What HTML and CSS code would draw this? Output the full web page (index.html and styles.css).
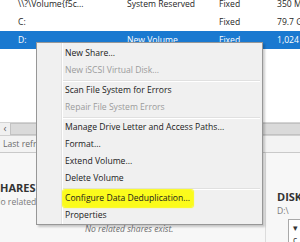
FILE: index.html
```html
<!DOCTYPE html>
<html>
<head>
<meta charset="utf-8">
<link rel="stylesheet" href="styles.css">
</head>
<body>
<div class="screen">
  <div class="list">
    <div class="rows">
      <div class="row"><span class="c1">\\?\Volume{f5c...</span><span class="c2">System Reserved</span><span class="c3">Fixed</span><span class="c4">350 MB</span></div>
      <div class="row"><span class="c1">C:</span><span class="c2"></span><span class="c3">Fixed</span><span class="c4">79.7 GB</span></div>
      <div class="row sel"><span class="c1">D:</span><span class="c2">New Volume</span><span class="c3">Fixed</span><span class="c4">1,024 GB</span></div>
    </div>
  </div>
  <div class="hscroll">
    <div class="arrow">&#8249;</div>
    <div class="thumb"></div>
  </div>
  <div class="status">Last refreshed on 10/10/2016</div>
  <div class="tiles">
    <div class="tile shares">
      <div class="tile-head">SHARES</div>
      <div class="tile-sub">No related shares</div>
      <div class="empty">No related shares exist.</div>
    </div>
    <div class="tile disks">
      <div class="tile-head">DISKS</div>
      <div class="tile-sub">D:\</div>
      <div class="disk-box"><span class="tri">&#9662;</span><span class="dtxt">c</span></div>
    </div>
  </div>

  <div class="menu">
    <div class="item">New Share...</div>
    <div class="item off">New iSCSI Virtual Disk...</div>
    <div class="sep"></div>
    <div class="item">Scan File System for Errors</div>
    <div class="item off">Repair File System Errors</div>
    <div class="sep"></div>
    <div class="item">Manage Drive Letter and Access Paths...</div>
    <div class="item">Format...</div>
    <div class="item">Extend Volume...</div>
    <div class="item">Delete Volume</div>
    <div class="sep"></div>
    <div class="item"><span class="mark">Configure Data Deduplication...</span></div>
    <div class="item">Properties</div>
  </div>
</div>
</body>
</html>
```

FILE: styles.css
```css
html, body {
  margin: 0;
  padding: 0;
}
body {
  width: 300px;
  height: 242px;
  overflow: hidden;
  background: #ffffff;
  font-family: "Open Sans", "Noto Sans", sans-serif;
  font-size: 8.6px;
  color: #1e1e1e;
}
.screen {
  position: relative;
  width: 300px;
  height: 242px;
  overflow: hidden;
  display: flex;
  flex-direction: column;
}
.list {
  flex-shrink: 0;
  height: 122px;
  background: #ffffff;
  overflow: hidden;
  border-bottom: 1px solid #d4d4d4;
}
.rows {
  margin-top: -5px;
}
.row {
  display: grid;
  grid-template-columns: 109px 92px 58px 60px;
  padding-left: 18px;
  height: 18px;
  line-height: 18px;
  white-space: nowrap;
}
.row.sel {
  background: #1a79d0;
  color: #ffffff;
}
.hscroll {
  flex-shrink: 0;
  height: 12px;
  display: flex;
  background: #f0f0f0;
}
.arrow {
  width: 10px;
  font-size: 10px;
  line-height: 11px;
  text-align: center;
  color: #606060;
}
.thumb {
  flex: 1;
  background: #dadada;
  border: 1px solid #c2c2c2;
  border-right: none;
}
.status {
  flex-shrink: 0;
  height: 16px;
  line-height: 16px;
  padding-left: 3px;
  background: #f3f3f3;
  color: #6a6a6a;
  border-top: 1px solid #d0d0d0;
  border-bottom: 1px solid #c9c9c9;
  white-space: nowrap;
}
.tiles {
  flex: 1;
  min-height: 0;
  overflow: hidden;
  display: flex;
  gap: 4px;
  background: #f7f7f7;
}
.tile {
  white-space: nowrap;
}
.shares {
  flex-shrink: 0;
  padding-top: 28px;
  width: 271px;
  margin-left: -6px;
  border-right: 1px solid #dcdcdc;
}
.disks {
  flex: 1;
  min-width: 0;
  padding-top: 37px;
  padding-left: 7px;
}
.tile-head {
  font-weight: bold;
  font-size: 11px;
  line-height: 14px;
  color: #333333;
}
.tile-sub {
  color: #7a7a7a;
  line-height: 14px;
}
.empty {
  margin-top: 14px;
  font-style: italic;
  color: #6e6e6e;
  padding-left: 91px;
}
.disk-box {
  margin-top: 1px;
  margin-left: 11px;
  height: 40px;
  background: #ffffff;
  border: 1px solid #a9a9a9;
  border-right: none;
  padding: 2px 0 0 4px;
  line-height: 12px;
  display: flex;
  flex-direction: column;
}
.tri {
  font-size: 9px;
  color: #333;
}
.dtxt {
  color: #333;
}

.menu {
  position: absolute;
  left: 36px;
  top: 42px;
  width: 225px;
  padding: 2px 0 0;
  background: #f0f0f0;
  border: 1px solid #979797;
  box-shadow: 2px 2px 2px rgba(0, 0, 0, 0.2);
  background-image: linear-gradient(to right, transparent 24px, #e2e2e2 24px, #e2e2e2 25px, #ffffff 25px, #ffffff 26px, transparent 26px);
}
.item {
  height: 17px;
  line-height: 17px;
  padding-left: 28px;
  white-space: nowrap;
  color: #1a1a1a;
}
.item.off {
  color: #9b9b9b;
}
.sep {
  height: 3px;
  margin-left: 26px;
  margin-right: 2px;
  background: linear-gradient(#e0e0e0, #e0e0e0) 0 1px / 100% 1px no-repeat, linear-gradient(#ffffff, #ffffff) 0 2px / 100% 1px no-repeat;
}
.mark {
  background: #fbfb1c;
  padding: 2px 3px 3px 2px;
  margin-left: -2px;
  border-radius: 2px;
  box-shadow: 0 0 1px 1px #fbfb1c;
}
```
